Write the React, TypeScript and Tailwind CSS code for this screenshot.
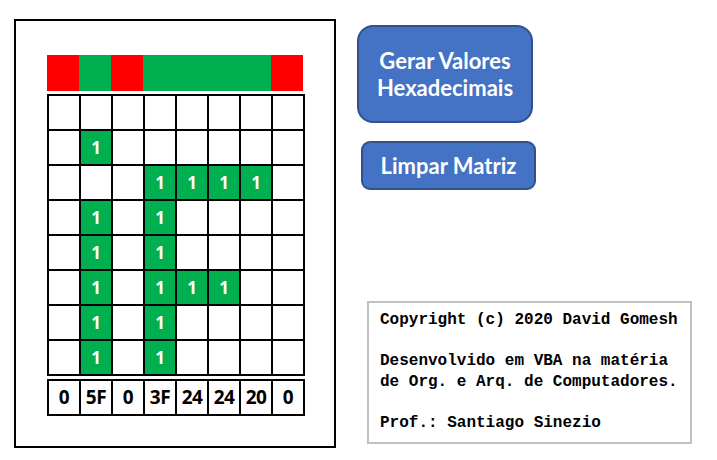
const hexValues = ["0", "5F", "0", "3F", "24", "24", "20", "0"];

// each column's byte, top row is the most significant bit
const bits = hexValues.map((h) => parseInt(h, 16));

function isOn(col: number, row: number) {
  return ((bits[col] >> (7 - row)) & 1) === 1;
}

function Matrix() {
  return (
    <div className="grid w-fit grid-cols-[repeat(8,32px)] border-l-2 border-t-2 border-black">
      {Array.from({ length: 64 }, (_, i) => {
        const row = Math.floor(i / 8);
        const col = i % 8;
        const on = isOn(col, row);
        return (
          <div
            key={i}
            className={`flex h-[35px] items-center justify-center border-r-2 border-b-2 border-black text-[17px] font-bold text-white ${
              on ? "bg-[#00b050]" : "bg-white"
            }`}
          >
            {on ? "1" : ""}
          </div>
        );
      })}
    </div>
  );
}

export default function App() {
  return (
    <div className="flex h-[460px] w-[717px] bg-white pl-[14px] pt-[19px] font-['Open_Sans',sans-serif]">
      <div className="flex h-[429px] w-[322px] flex-col items-start border-2 border-black pl-[31px] pt-[34px]">
        <div className="flex h-[36px] w-[257px]">
          {bits.map((b, i) => (
            <div key={i} className={`w-[32px] shrink-0 ${b ? "bg-[#00b050]" : "bg-[#ff0000]"}`} />
          ))}
        </div>
        <div className="mt-[3px]">
          <Matrix />
        </div>
        <div className="mt-[3px] grid w-fit grid-cols-[repeat(8,32px)] border-l-2 border-t-2 border-black">
          {hexValues.map((h, i) => (
            <div
              key={i}
              className="flex h-[35px] items-center justify-center border-r-2 border-b-2 border-black text-[19px] font-bold tracking-[-0.5px] text-black"
            >
              {h}
            </div>
          ))}
        </div>
      </div>

      <div className="ml-[21px] flex flex-col items-start font-['Lato',sans-serif]">
        <button
          type="button"
          className="mt-[6px] flex h-[98px] w-[176px] flex-col items-center justify-center rounded-[16px] border-2 border-[#2f528f] bg-[#4472c4] text-[22px] leading-[27px] font-bold text-white"
        >
          <span>Gerar Valores</span>
          <span>Hexadecimais</span>
        </button>
        <button
          type="button"
          className="mt-[18px] ml-[4px] flex h-[49px] w-[175px] items-center justify-center rounded-[9px] border-2 border-[#2f528f] bg-[#4472c4] text-[22px] font-bold text-white"
        >
          Limpar Matriz
        </button>
        <div className="mt-[111px] ml-[10px] h-[143px] w-[325px] border-2 border-[#c0c0c0] pl-[11px] pt-[7px] font-['Liberation_Mono',monospace] text-[16px] leading-[20.6px] font-bold text-black">
          <p>Copyright (c) 2020 David Gomesh</p>
          <p>&nbsp;</p>
          <p>Desenvolvido em VBA na matéria</p>
          <p>de Org. e Arq. de Computadores.</p>
          <p>&nbsp;</p>
          <p>Prof.: Santiago Sinezio</p>
        </div>
      </div>
    </div>
  );
}
